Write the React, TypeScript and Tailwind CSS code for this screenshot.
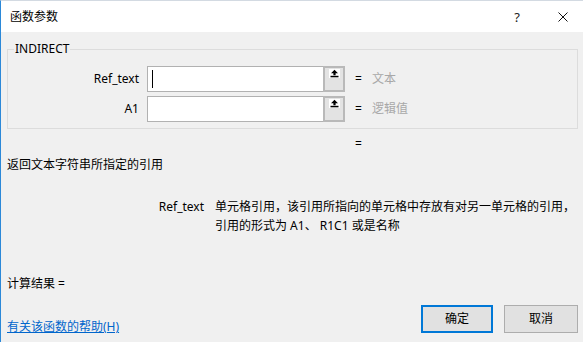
import React from 'react';

const font = "font-['Noto_Sans','Noto_Sans_CJK_SC',sans-serif]";

function RefButton() {
  return (
    <div className="w-[22px] h-full border-2 border-[#b9b9b9] bg-[#e3e3e3] flex justify-center items-start">
      <svg width="11" height="9" viewBox="0 0 11 9" className="mt-[1px]">
        <rect x="0" y="0" width="11" height="9" fill="#fff" />
        <path d="M5.5 0.8 L9 4.3 L6.6 4.3 L6.6 6.2 L4.4 6.2 L4.4 4.3 L2 4.3 Z" fill="#000" />
        <rect x="1.5" y="6.8" width="8" height="1.5" fill="#000" />
      </svg>
    </div>
  );
}

function ArgRow({ label, hint, focused }: { label: string; hint: string; focused?: boolean }) {
  return (
    <div className="flex items-center h-[26px]">
      <div className="w-[131px] text-right text-[12px] leading-[16px] text-black">{label}</div>
      <div className="ml-[8px] w-[198px] h-[26px] flex">
        <div className="flex-1 h-full border border-r-0 border-[#b1b1b1] bg-white flex items-center">
          {focused && <div className="ml-[4px] w-px h-[18px] bg-black" />}
        </div>
        <RefButton />
      </div>
      <div className="ml-[10px] w-[17px] text-[12px] leading-[16px] text-black">=</div>
      <div className="text-[12px] leading-[16px] text-[#a8a8a8]">{hint}</div>
    </div>
  );
}

export default function App() {
  return (
    <div className={`w-[583px] h-[342px] flex flex-col border-l border-[#2b88d8] border-t border-t-[#d3dae2] bg-[#f0f0f0] overflow-hidden ${font}`}>
      {/* Title bar */}
      <div className="h-[31px] bg-white flex items-center shrink-0">
        <span className="ml-[9px] text-[12px] leading-[16px] text-black">函数参数</span>
        <span className="ml-auto text-[13px] leading-[16px] text-[#222]">?</span>
        <svg width="10" height="10" viewBox="0 0 10 10" className="ml-[38px] mr-[15px]">
          <path d="M0.5 0.5 L9.5 9.5 M9.5 0.5 L0.5 9.5" stroke="#111" strokeWidth="1" />
        </svg>
      </div>

      {/* Body */}
      <div className="flex-1 flex flex-col pl-[6px] pr-[5px] text-black">
        <fieldset className="mt-[9px] border border-[#dcdcdc] p-0 m-0 pb-[6px]">
          <legend className="ml-[6px] px-[1px] text-[12px] leading-[16px] p-0">INDIRECT</legend>
          <div className="mt-[9px] flex flex-col gap-[4px]">
            <ArgRow label="Ref_text" hint="文本" focused />
            <ArgRow label="A1" hint="逻辑值" />
          </div>
        </fieldset>

        <div className="mt-[7px] pl-[348px] text-[12px] leading-[16px]">=</div>

        <div className="mt-[5px] text-[12px] leading-[16px]">返回文本字符串所指定的引用</div>

        <div className="mt-[24px] flex text-[12px] leading-[19px]">
          <div className="w-[197px] text-right">Ref_text</div>
          <div className="ml-[11px] whitespace-nowrap">
            单元格引用，该引用所指向的单元格中存放有对另一单元格的引用，
            <br />
            引用的形式为 A1、 R1C1 或是名称
          </div>
        </div>

        <div className="mt-[41px] text-[12px] leading-[16px]">计算结果 =</div>

        <div className="mt-[13px] flex items-start">
          <a href="#" className="mt-[14px] text-[12px] leading-[16px] text-[#0066cc] underline">
            有关该函数的帮助(H)
          </a>
          <button className="ml-auto w-[72px] h-[28px] border-2 border-[#0078d7] bg-[#e1e1e1] text-[12px] leading-[16px] text-black">
            确定
          </button>
          <button className="ml-[11px] w-[74px] h-[28px] border border-[#adadad] bg-[#e1e1e1] text-[12px] leading-[16px] text-black">
            取消
          </button>
        </div>
      </div>
    </div>
  );
}
